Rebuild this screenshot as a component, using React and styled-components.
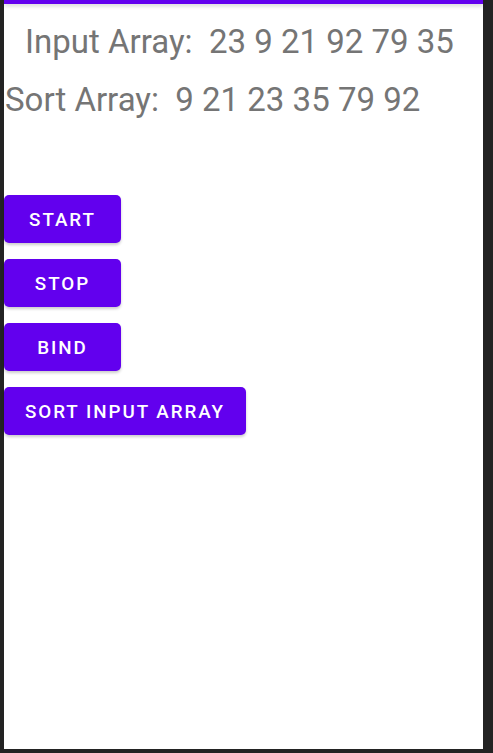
import { createGlobalStyle, styled } from "styled-components";

const GlobalStyle = createGlobalStyle`
  html, body {
    margin: 0;
    padding: 0;
    background: #232323;
  }
  * {
    box-sizing: border-box;
  }
`;

const buttons = ["START", "STOP", "BIND", "SORT INPUT ARRAY"];

export default function App() {
  return (
    <>
      <GlobalStyle />
      <Frame>
        <Screen>
          <AppBar />
          <InputLine>Input Array:&nbsp; 23 9 21 92 79 35</InputLine>
          <SortLine>Sort Array:&nbsp; 9 21 23 35 79 92</SortLine>
          <Buttons>
            {buttons.map((label) => (
              <Button key={label}>{label}</Button>
            ))}
          </Buttons>
        </Screen>
      </Frame>
    </>
  );
}

const Frame = styled.div`
  width: 493px;
  height: 753px;
  padding: 0 10px 4px 4px;
  background: #232323;
`;

const Screen = styled.div`
  height: 100%;
  background: #ffffff;
  display: flex;
  flex-direction: column;
  font-family: Roboto, "Noto Sans", sans-serif;
`;

const AppBar = styled.div`
  height: 4px;
  background: #6200ee;
  box-shadow: 0 2px 4px rgba(0, 0, 0, 0.18);
`;

const InputLine = styled.div`
  margin-top: 19px;
  padding-right: 8px;
  font-size: 33px;
  line-height: 38.5px;
  color: #757575;
  text-align: center;
`;

const SortLine = styled.div`
  margin-top: 19px;
  font-size: 33px;
  line-height: 38.5px;
  color: #757575;
  padding-left: 1px;
`;

const Buttons = styled.div`
  margin-top: 75.5px;
  display: flex;
  flex-direction: column;
  align-items: flex-start;
  gap: 16px;
`;

const Button = styled.button`
  min-width: 117px;
  height: 48px;
  padding: 2px 21px 0;
  border: none;
  border-radius: 5px;
  background: #6200ee;
  color: #ffffff;
  font-family: Roboto, "Noto Sans", sans-serif;
  font-weight: 500;
  font-size: 18.8px;
  letter-spacing: 1.95px;
  box-shadow: 0 2px 3px rgba(0, 0, 0, 0.2);
  cursor: pointer;
`;
